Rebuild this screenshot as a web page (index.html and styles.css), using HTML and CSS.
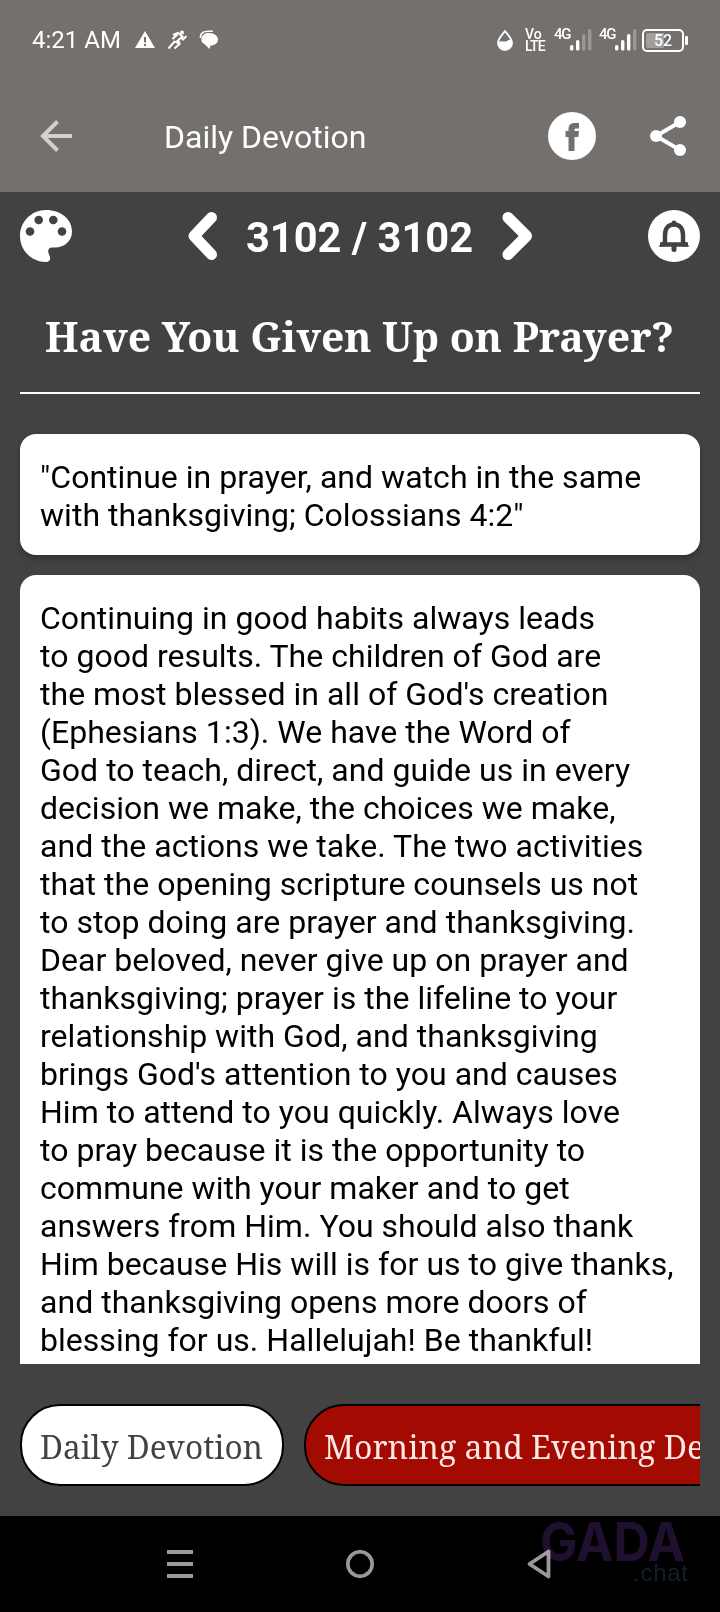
FILE: index.html
```html
<!DOCTYPE html>
<html lang="en">
<head>
<meta charset="utf-8">
<title>Daily Devotion</title>
<link rel="stylesheet" href="styles.css">
</head>
<body>
<div class="screen">
  <header class="top">
    <div class="status">
      <span class="clock">4:21 AM</span>
      <svg class="status-icons" width="84" height="20" viewBox="0 0 84 20">
        <path fill="#fff" fill-rule="evenodd" d="M10 1L20 18H0ZM9 7V12.5H11V7ZM9 14V16H11V14Z"/>
        <g fill="none" stroke="#fff" stroke-width="2">
          <path d="M38 5L43 3L47.500 6.500L41 12L44.500 14L39.500 18.500M37.500 9L42.500 4.500M46 7L48 9.500L51.500 6M40 11L33.500 18.500M42 10L45 12.500"/>
        </g>
        <circle cx="47" cy="2.500" r="2" fill="#fff"/>
        <path fill="#fff" d="M74 3C79.500 3 83 6 83 9.500C83 13 80 15.500 75.500 15.500L74.500 19L70 14.500C67 13 66 11 66.500 8.500C67 5 70 3 74 3Z"/>
        <path fill="none" stroke="#fff" stroke-width="1.600" d="M65.500 8C65 3 69 1.200 73 1.200H78"/>
      </svg>
      <div class="status-right">
        <svg width="16" height="22" viewBox="0 0 16 22">
          <path fill="none" stroke="#fff" stroke-width="1.800" d="M8 2C5 6 1 10 1 14A7 7 0 0 0 15 14C15 10 11 6 8 2Z"/>
          <path fill="#fff" d="M1 14C4 10 7 14 10 12C12 10.500 13.500 10.500 15 11.500V14A7 7 0 0 1 1 14Z"/>
        </svg>
        <span class="volte"><span>Vo</span><span>LTE</span></span>
        <span class="net net-a"><span>4G</span>
          <svg width="22" height="23" viewBox="0 0 22 23"><g fill="#fff"><rect y="17" width="3.400" height="5.500" rx="1.500"/><rect x="6" y="12" width="3.400" height="10.500" rx="1.500"/><g opacity=".28"><rect x="12" y="6" width="3.400" height="16.500" rx="1.500"/><rect x="18" y="1" width="3.400" height="21.500" rx="1.500"/></g></g></svg>
        </span>
        <span class="net net-b"><span>4G</span>
          <svg width="22" height="23" viewBox="0 0 22 23"><g fill="#fff"><rect y="17" width="3.400" height="5.500" rx="1.500"/><rect x="6" y="12" width="3.400" height="10.500" rx="1.500"/><rect x="12" y="6" width="3.400" height="16.500" rx="1.500"/><rect x="18" y="1" width="3.400" height="21.500" rx="1.500" opacity=".28"/></g></svg>
        </span>
        <span class="battery"><span>52</span></span><i class="battery-tip"></i>
      </div>
    </div>
    <div class="appbar">
      <svg class="back" width="32" height="32" viewBox="0 0 32 32" fill="none" stroke="#d2d1d0" stroke-width="4"><path d="M32 16H3M17.500 1.500L3 16L17.500 30.500"/></svg>
      <h1 class="appbar-title">Daily Devotion</h1>
      <svg class="facebook" width="48" height="48" viewBox="0 0 48 48"><circle cx="24" cy="24" r="24" fill="#fff"/><path fill="#73706e" d="M20.500 39V25H17.500V19H20.500V17.500C20.500 13 22.500 11 27 11H31V16.500H28.500C27 16.500 26.500 17 26.500 18.500V19H31L30.300 25H26.500V39Z"/></svg>
      <svg class="share" width="36" height="40" viewBox="0 0 36 40" fill="#fff"><path fill="none" stroke="#fff" stroke-width="4" d="M30 6L6 20L30 34"/><circle cx="30" cy="6" r="6"/><circle cx="6" cy="20" r="6"/><circle cx="30" cy="34" r="6"/></svg>
    </div>
  </header>

  <main class="content">
    <div class="pager">
      <svg width="52" height="52" viewBox="0 0 52 52"><path fill="#fff" d="M26 0C40.500 0 52 9 52 21.500C52 31 44.500 37.500 35 37.500H32C29 37.500 27.500 40 28.500 43L30 47C30.800 50 29 52 26 52C11.500 52 0 40.500 0 26S11.500 0 26 0Z"/><g fill="#424242"><circle cx="10" cy="21.500" r="4.300"/><circle cx="18.700" cy="10" r="4.300"/><circle cx="33.300" cy="10" r="4.300"/><circle cx="42" cy="21.500" r="4.300"/></g></svg>
      <div class="pager-mid">
        <svg width="30" height="48" viewBox="0 0 30 48" fill="none" stroke="#fff" stroke-width="11" stroke-linecap="round" stroke-linejoin="round"><path d="M23.500 5.500L6 24L23.500 42.500"/></svg>
        <span class="count">3102 / 3102</span>
        <svg width="31" height="48" viewBox="0 0 31 48" fill="none" stroke="#fff" stroke-width="11" stroke-linecap="round" stroke-linejoin="round"><path d="M6 5.500L24.500 24L6 42.500"/></svg>
      </div>
      <svg width="52" height="52" viewBox="0 0 52 52"><circle cx="26" cy="26" r="26" fill="#fff"/><path fill="none" stroke="#424242" stroke-width="4.400" stroke-linejoin="round" d="M12 34.500H40M17 34V25C17 18.500 20 14.500 26 14.500S35 18.500 35 25V34"/><circle cx="26" cy="12.800" r="2.400" fill="#424242"/><path fill="#424242" d="M10.500 36.500L17 29V36.500ZM41.500 36.500L35 29V36.500ZM23.500 36H28.500V39.500A2.500 2.500 0 0 1 23.500 39.500Z"/></svg>
    </div>
    <h2 class="title">
      <svg width="680" height="70" viewBox="0 0 680 70"><text x="25" y="47" textLength="629" lengthAdjust="spacingAndGlyphs">Have You Given Up on Prayer?</text></svg>
    </h2>
    <section class="card verse">"Continue in prayer, and watch in the same<br>with thanksgiving; Colossians 4:2"</section>
    <article class="card body">Continuing in good habits always leads<br>to good results. The children of God are<br>the most blessed in all of God's creation<br>(Ephesians 1:3). We have the Word of<br>God to teach, direct, and guide us in every<br>decision we make, the choices we make,<br>and the actions we take. The two activities<br>that the opening scripture counsels us not<br>to stop doing are prayer and thanksgiving.<br>Dear beloved, never give up on prayer and<br>thanksgiving; prayer is the lifeline to your<br>relationship with God, and thanksgiving<br>brings God's attention to you and causes<br>Him to attend to you quickly. Always love<br>to pray because it is the opportunity to<br>commune with your maker and to get<br>answers from Him. You should also thank<br>Him because His will is for us to give thanks,<br>and thanksgiving opens more doors of<br>blessing for us. Hallelujah! Be thankful!</article>
    <div class="chips">
      <div class="chip chip-light"><svg width="224" height="50" viewBox="0 0 224 50"><text x="0" y="38.500" textLength="223" lengthAdjust="spacingAndGlyphs">Daily Devotion</text></svg></div>
      <div class="chip chip-red"><svg width="395" height="50" viewBox="0 0 395 50"><text x="0" y="38.500" textLength="380" lengthAdjust="spacingAndGlyphs">Morning and Evening De</text></svg></div>
    </div>
  </main>

  <nav class="nav">
    <svg width="26" height="28" viewBox="0 0 26 28" fill="#999"><rect width="26" height="4"/><rect y="12" width="26" height="4"/><rect y="24" width="26" height="4"/></svg>
    <svg width="28" height="28" viewBox="0 0 28 28"><circle cx="14" cy="14" r="12.200" fill="none" stroke="#999" stroke-width="3.600"/></svg>
    <svg width="24" height="30" viewBox="0 0 24 30"><path fill="none" stroke="#999" stroke-width="3.800" stroke-linejoin="round" d="M21.500 2.500V27.500L2.500 15Z"/></svg>
    <svg class="watermark" width="150" height="66" viewBox="0 0 150 66"><text class="wm-name" x="0" y="45" textLength="145" lengthAdjust="spacingAndGlyphs">GADA</text><text class="wm-sub" x="93" y="65" textLength="55">.chat</text></svg>
  </nav>
</div>
</body>
</html>
```

FILE: styles.css
```css
* { box-sizing: border-box; }
body { margin: 0; font-family: Roboto, sans-serif; background: #424242; }
svg { display: block; flex: none; overflow: visible; }
.screen { width: 720px; height: 1612px; display: flex; flex-direction: column; overflow: hidden; }

.top { height: 192px; background: #73706e; color: #fff; }
.status { height: 80px; padding: 0 32px; display: flex; align-items: center; }
.clock { font-size: 24px; line-height: 28px; width: 87px; white-space: nowrap; }
.status-icons { margin-left: 16px; }
.status-right { margin-left: auto; display: flex; align-items: center; height: 24px; }
.volte { display: flex; flex-direction: column; margin-left: 12px; width: 29px; font-size: 14px; line-height: 12px; font-weight: 500; letter-spacing: -.8px; }
.volte span:first-child { letter-spacing: 0; }
.net { display: flex; width: 38px; font-size: 15px; line-height: 13px; font-weight: 500; letter-spacing: -1.200px; align-self: flex-start; }
.net span { width: 16px; flex: none; }
.net-b { margin-left: 7px; }
.battery { margin-left: 5px; width: 42px; height: 23px; border: 2px solid #fff; border-radius: 5px; font-size: 16px; font-weight: 500; line-height: 15px; text-align: center; padding: 2px; }
.battery span { display: block; background: linear-gradient(90deg, #a19f9e 52%, transparent 52%); border-radius: 2px; }
.battery-tip { width: 3px; height: 9px; background: #fff; border-radius: 1px; margin-left: 1px; }

.appbar { height: 112px; padding: 0 34px 0 40px; display: flex; align-items: center; }
.appbar-title { margin: 2px auto 0 92px; font-size: 32px; line-height: 38px; font-weight: 400; white-space: nowrap; }
.share { margin-left: 54px; }

.content { height: 1324px; padding: 0 20px; }
.pager { height: 88px; display: flex; align-items: center; justify-content: space-between; }
.pager-mid { display: flex; align-items: center; justify-content: space-between; width: 345px; }
.count { font-size: 41.600px; font-weight: 700; color: #fff; line-height: 48px; padding-top: 4px; white-space: nowrap; }
.title { margin: 25px 0 40px; height: 89px; border-bottom: 2px solid #fff; }
.title text { font: 700 42px "Noto Serif", "DejaVu Serif Condensed", "DejaVu Serif", serif; fill: #fff; }
.card { background: #fff; color: #000; padding: 24px 20px 0; font-size: 32px; line-height: 38px; letter-spacing: .03px; white-space: nowrap; }
.verse { height: 121px; border-radius: 16px; box-shadow: 0 4px 6px rgba(0, 0, 0, .22); }
.body { margin-top: 20px; height: 789px; border-radius: 16px 16px 0 0; overflow: hidden; }
.chips { margin-top: 40px; display: flex; gap: 20px; overflow: hidden; }
.chip { height: 82px; flex: none; border: 2px solid #000; border-radius: 40px; padding: 14px 18px; }
.chip text { font: 32px "Noto Serif", "DejaVu Serif Condensed", "DejaVu Serif", serif; fill: currentColor; }
.chip-light { width: 264px; background: #fff; color: #424242; }
.chip-red { width: 500px; background: #a30b02; color: #ffe9e6; }

.nav { position: relative; height: 96px; background: #000; display: flex; align-items: center; padding: 0 169px 0 167px; justify-content: space-between; }
.watermark { position: absolute; left: 540px; top: 0; mix-blend-mode: screen; }
.wm-name { font: 700 53px Inter, sans-serif; fill: #1f1030; }
.wm-sub { font: 24px "Liberation Sans", sans-serif; fill: #10202a; }
```
